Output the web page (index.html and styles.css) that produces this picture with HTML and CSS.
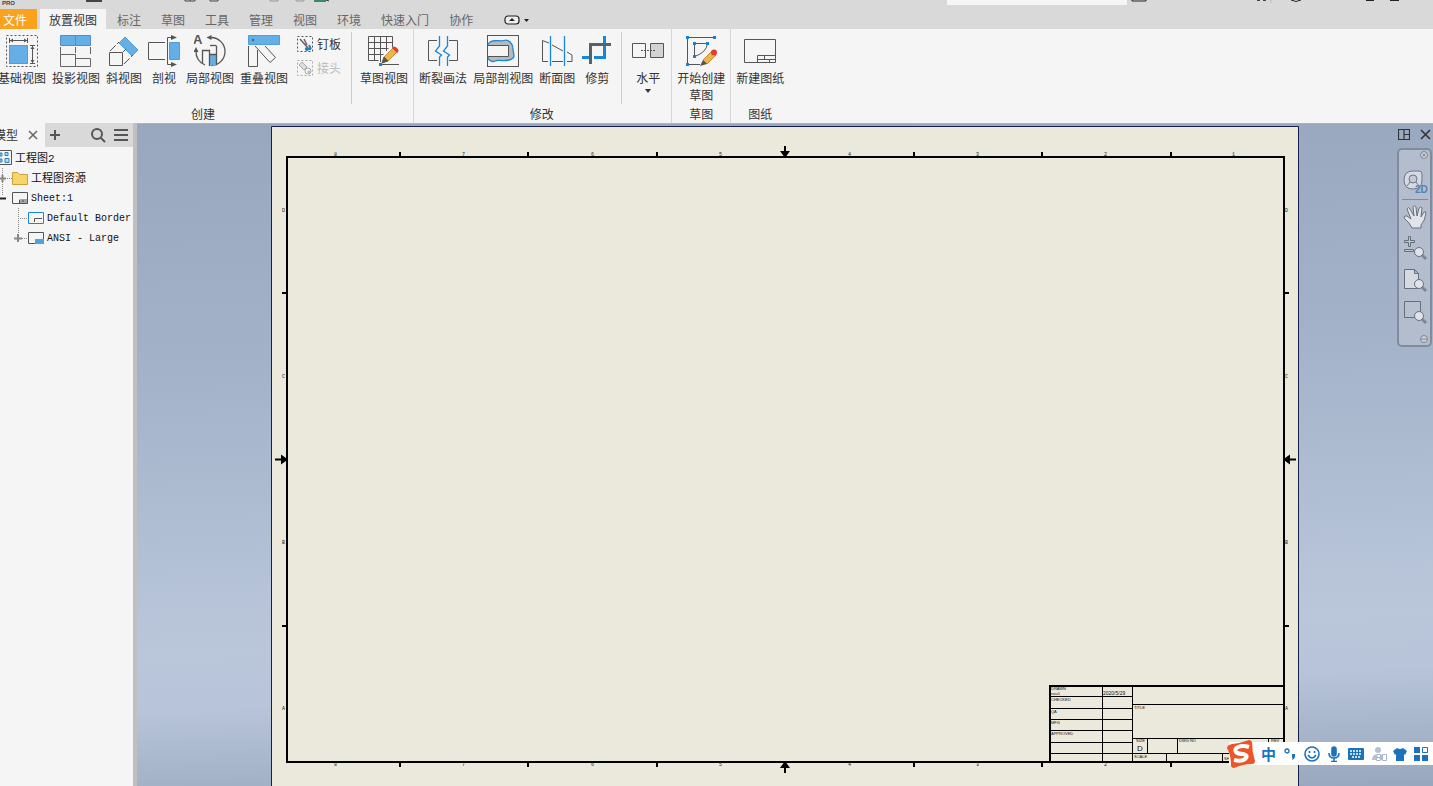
FILE: index.html
```html
<!DOCTYPE html>
<html lang="zh-CN">
<head>
<meta charset="utf-8">
<title>工程图2</title>
<link rel="stylesheet" href="styles.css">
</head>
<body>
<div class="app">
  <header class="titlebar">
    <svg class="quick" width="340" height="7" viewBox="0 0 340 7" fill="none" stroke="#444">
      <path d="M87 0v1h14V0" stroke-width="2"/><path d="M185 0v1h10V0M190 0v1M210 0v1h8V0"/>
      <path d="M270 0v1h8V0M296 0v1h8V0" stroke="#999"/><path d="M314 1h12" stroke="#3c8a64" stroke-width="2"/><path d="M326 0l3 1" stroke="#333"/>
      <text x="2" y="5" class="pro">PRO</text>
    </svg>
    <input class="search" type="text" aria-label="搜索">
    <svg class="window-controls" width="306" height="7" viewBox="0 0 306 7" fill="none" stroke="#222">
      <path d="M5 0v1h14V0" stroke-width="1"/><path d="M130 0h3M136 0h3" stroke-width="2" stroke="#444"/><path d="M144 0v3" stroke="#bbb"/><path d="M164 0q5 3 10 0"/><path d="M239 0h8M263 0h9" stroke-width="2"/>
    </svg>
  </header>

  <nav class="tabs">
    <button class="tab file">文件</button>
    <button class="tab active">放置视图</button>
    <button class="tab">标注</button>
    <button class="tab">草图</button>
    <button class="tab">工具</button>
    <button class="tab">管理</button>
    <button class="tab">视图</button>
    <button class="tab">环境</button>
    <button class="tab">快速入门</button>
    <button class="tab">协作</button>
    <button class="collapse" aria-label="折叠功能区">
      <svg width="26" height="10" viewBox="0 0 26 10"><rect x="1" y="1" width="14" height="8" rx="3" fill="#eee" stroke="#222" stroke-width="1.2"/><path d="M5 6l3-3 3 3zM20 4h5l-2.500 3z" fill="#222"/></svg>
    </button>
  </nav>

  <section class="ribbon">
    <div class="panel first">
      <div class="tools">
        <button class="tool"><svg width="32" height="32" viewBox="0 0 32 32" fill="none" stroke="#555"><rect x=".5" y=".5" width="31" height="31" stroke-dasharray="2 2"/><rect x="3.500" y="10.500" width="18" height="18" fill="#66afe6" stroke="#4f9fdb"/><path d="M3.500 3v5M21.500 3v5M4 5.500h17M24 10.500h5M24 28.500h5M26.500 11v17"/><path d="M4 5.500l3-2v4zM21 5.500l-3-2v4zM26.500 11l-2 3h4zM26.500 28l-2-3h4z" fill="#555" stroke="none"/></svg><span>基础视图</span></button>
        <button class="tool"><svg width="32" height="32" viewBox="0 0 32 32" fill="none" stroke="#666"><path d="M.5.500h30v10H.5z" fill="#66afe6" stroke="#4f8fc4"/><path d="M15.500 0v10" stroke="#4f8fc4"/><path d="M.5 12v7M30.500 12v7M15.500 12v6M.5 19.500h15v4h15v8H.5zM15.500 19.500h-15M15.500 31v-8"/></svg><span>投影视图</span></button>
        <button class="tool"><svg width="32" height="32" viewBox="0 0 32 32" fill="none" stroke="#555"><path d="M1.500 17.500h13v13h-13z"/><path d="M17 2l13 13-6 6L11 8z" fill="#66afe6" stroke="#4f9fdb"/><path d="M2 16L11 7M15 17l3-3M16 29L25 20" stroke-dasharray="8 2"/></svg><span>斜视图</span></button>
        <button class="tool"><svg width="32" height="32" viewBox="0 0 32 32" fill="none" stroke="#555"><path d="M17 7.500H.5v17H17M24 2.500h-4.500v27H24"/><path d="M23 0l6 2.500L23 5zM23 27l6 2.500-6 2.500z" fill="#555" stroke="none"/><path d="M21.500 7.500h10v17h-10z" fill="#66afe6" stroke="#4f9fdb"/></svg><span>剖视</span></button>
        <button class="tool"><svg width="32" height="32" viewBox="0 0 32 32" fill="none" stroke="#555" stroke-width="1.300"><path d="M17 2.500A14 14 0 0 1 17 30.500M2 16A14 14 0 0 0 11 30"/><path d="M2 12l-2.500 5h5zM12.500 2.500l5-2.500v5z" fill="#555" stroke="none"/><path d="M15 20h8v10.500h-8z" fill="#66afe6" stroke="none"/><path d="M8.500 28V15.500h7V31M15.500 19.500h7M22.500 30V10.500"/><path d="M16 10.500h6"/><text x="-1" y="9" class="mark">A</text></svg><span>局部视图</span></button>
        <button class="tool"><svg width="32" height="32" viewBox="0 0 32 32" fill="none" stroke="#555"><path d="M.5.500h31v9H.5z" fill="#66afe6" stroke="#4f9fdb"/><circle cx="5" cy="5" r="1.200" fill="#35638a" stroke="none"/><path d="M.5 11v20.500h9V15M7 11l15 16.500 5.500-5L17 11"/></svg><span>重叠视图</span></button>
        <div class="stack">
          <button class="mini"><svg width="16" height="16" viewBox="0 0 16 16" fill="none"><rect x=".5" y=".5" width="15" height="15" stroke="#555" stroke-dasharray="2 2"/><path d="M3 3l8 9M7 3l3 6" stroke="#735f68" stroke-width="1.500"/><path d="M8 13h6M12 9l2 4" stroke="#1c80cc" stroke-width="2"/><circle cx="10" cy="13" r="2" fill="#1c80cc"/></svg><span>钉板</span></button>
          <button class="mini" disabled><svg width="16" height="16" viewBox="0 0 16 16" fill="none" stroke="#aaa"><rect x=".5" y=".5" width="15" height="15" stroke-dasharray="2 2"/><path d="M2 5l3-3 5 5-3 3z" fill="#ddd"/><circle cx="11" cy="11" r="3"/><circle cx="12" cy="12" r="1"/></svg><span>接头</span></button>
        </div>
        <i class="sep"></i>
        <button class="tool"><svg width="32" height="32" viewBox="0 0 32 32" fill="none" stroke="#555"><path d="M.5 1.500h24v11M.5 1.500v24h10M.5 7.500h24M.5 13.500h20M.5 19.500h15M6.500 1v24M12.500 1v26M18.500 1v15M14 29.500h17"/><path d="M16 22L25 13l4 4-9 9z" fill="#edb44b" stroke="#c48f3c"/><path d="M16 22l4 4-6 2z" fill="#555"/><path d="M24 13q2-3 5 0t0 5z" fill="#e53c32" stroke="none"/><path d="M11 28h3v3h-3z" fill="#1c80cc" stroke="none"/></svg><span>草图视图</span></button>
      </div>
      <div class="panel-name">创建</div>
    </div>
    <div class="panel">
      <div class="tools">
        <button class="tool"><svg width="32" height="32" viewBox="0 0 32 32" fill="none" stroke="#555"><path d="M10 5.500H1.500v20H10M22 5.500h8.500v20H22"/><path d="M12.500 1v10l-4 5 6 4-2 2v9M20.500 1v10l-4 5 6 4-2 2v9" stroke="#1688dc" stroke-width="1.300"/></svg><span>断裂画法</span></button>
        <button class="tool"><svg width="32" height="32" viewBox="0 0 32 32" fill="none" stroke="#555"><path d="M1 9C5 3 12 7 17 5.500S26 9 26 14s4 9-4 11-10-1-14 1-6-2-7-2z" fill="#b7babd" stroke="#1688dc" stroke-width="1.300"/><path d="M0 10.500h21.500v11H0" fill="#f5f5f5"/><rect x=".5" y=".5" width="31" height="31"/></svg><span>局部剖视图</span></button>
        <button class="tool"><svg width="32" height="32" viewBox="0 0 32 32" fill="none" stroke="#555"><path d="M7 26.500H1.500v-21L8 8M11 10l11 6M11 26.500h11M26 17l5 3v6.500h-5"/><path d="M9.500 1v30M23.500 1v30" stroke="#1688dc" stroke-width="1.300"/></svg><span>断面图</span></button>
        <button class="tool"><svg width="32" height="32" viewBox="0 0 32 32" fill="none" stroke-width="3"><path d="M23.500 1v7M23.500 11v11.500H13M8 22.500H1" stroke="#1688dc"/><path d="M9.500 29V9.500H30" stroke="#596166"/></svg><span>修剪</span></button>
        <i class="sep wide"></i>
        <button class="tool drop"><svg width="32" height="32" viewBox="0 0 32 32" fill="none" stroke="#555"><path d="M.5 8.500h13v14H.5z"/><path d="M18.500 8.500h13v14h-13z" fill="#d3d3d3"/><path d="M9 15.500h14" stroke-dasharray="2 1"/></svg><span>水平</span><svg class="caret" width="6" height="4" viewBox="0 0 6 4"><path d="M0 0h6L3 4z" fill="#333"/></svg></button>
      </div>
      <div class="panel-name">修改</div>
    </div>
    <div class="panel">
      <div class="tools">
        <button class="tool"><svg width="32" height="32" viewBox="0 0 32 32" fill="none" stroke="#555"><path d="M2.500 29V2.500h27M2.500 29.500H15M9.500 21V8.500h13q-1 9-13 13"/><path d="M1 1h3v3H1zM28 1h3v3h-3zM1 28h3v3H1zM8 7h3v3H8zM21 7h3v3h-3zM8 20h3v3H8z" fill="#1c80cc" stroke="none"/><path d="M18 25l9-9 4 4-9 9z" fill="#edb44b" stroke="#c48f3c"/><path d="M18 25l4 4-7 2z" fill="#555" stroke="none"/><circle cx="29" cy="17.500" r="3" fill="#e53c32" stroke="none"/></svg><span>开始创建<br>草图</span></button>
      </div>
      <div class="panel-name">草图</div>
    </div>
    <div class="panel last">
      <div class="tools">
        <button class="tool"><svg width="32" height="32" viewBox="0 0 32 32" fill="none" stroke="#555"><path d="M.5 4.500h31v23H.5zM13.500 27V20.500H31M14 24.500h17M20.500 21v3M25.500 25v3"/></svg><span>新建图纸</span></button>
      </div>
      <div class="panel-name">图纸</div>
    </div>
  </section>

  <main class="workspace">
    <aside class="browser">
      <div class="browser-head">
        <div class="browser-tab"><span>模型</span><button aria-label="关闭"><svg width="10" height="10" viewBox="0 0 10 10"><path d="M1 1l8 8M9 1L1 9" stroke="#666" stroke-width="1.500"/></svg></button></div>
        <button aria-label="添加"><svg width="10" height="10" viewBox="0 0 10 10"><path d="M5 0v10M0 5h10" stroke="#555" stroke-width="2"/></svg></button>
        <button class="find" aria-label="查找"><svg width="15" height="15" viewBox="0 0 15 15" fill="none" stroke="#555" stroke-width="2"><circle cx="6" cy="6" r="5"/><path d="M10 10l4 4"/></svg></button>
        <button aria-label="菜单"><svg width="14" height="12" viewBox="0 0 14 12"><path d="M0 1h14M0 6h14M0 11h14" stroke="#555" stroke-width="2"/></svg></button>
      </div>
      <ul class="tree">
        <li><svg width="15" height="16" viewBox="0 0 15 16" fill="none" stroke="#555"><path d="M0 .5h11.500v14H0"/><path d="M0 3h2v3H0zM5 2.500h3v3H5zM5 8.500h4v4H5zM0 9h2v3H0z" stroke="#2f80b8" fill="#b4d9f3"/></svg><span>工程图2</span></li>
        <li><svg width="31" height="20" viewBox="0 0 31 20" fill="none"><path d="M2.500 0v20M7 10.500h5" stroke="#888" stroke-dasharray="1 1"/><path d="M0 10.500h6M2.500 7v7" stroke="#888" stroke-width="2"/><path d="M12.500 16.500V4.500h5l2 2h8v10z" fill="#f8d568" stroke="#caa13c"/></svg><span>工程图资源</span></li>
        <li class="latin"><svg width="31" height="20" viewBox="0 0 31 20" fill="none" stroke="#555"><path d="M2.500 0v8" stroke="#888" stroke-dasharray="1 1"/><path d="M0 10.500h6" stroke="#222" stroke-width="2"/><path d="M12.500 4.500h15v11h-15zM19.500 15v-3H27M19 14h8M23 12v2"/></svg><span>Sheet:1</span></li>
        <li class="latin"><svg width="47" height="20" viewBox="0 0 47 20" fill="none"><path d="M18.500 0v20M20 10.500h7" stroke="#888" stroke-dasharray="1 1"/><path d="M28.500 4.500h15v11h-15z" stroke="#1688dc"/><path d="M34.500 14v-3.500H42" stroke="#555"/></svg><span>Default Border</span></li>
        <li class="latin"><svg width="47" height="20" viewBox="0 0 47 20" fill="none"><path d="M18.500 0v6M22 10.500h5" stroke="#888" stroke-dasharray="1 1"/><path d="M14 10.500h8M18 6v8" stroke="#888" stroke-width="2"/><path d="M28.500 4.500h15v11h-15z" stroke="#555"/><path d="M35 11h9v5h-9z" fill="#4fa3de"/></svg><span>ANSI - Large</span></li>
      </ul>
    </aside>

    <div class="canvas">
      <svg class="sheet" width="1028" height="664" viewBox="0 0 1028 664" fill="none" stroke="#000">
        <path d="M.5 664V.5h1027V664" fill="#ebe9db" stroke="#16204a"/>
        <path d="M16 31h997v605H16z" stroke-width="2"/>
        <path d="M129 31v-5M257 31v-5M386 31v-5M643 31v-5M771 31v-5M900 31v-5M129 636v5M257 636v5M386 636v5M643 636v5M771 636v5M900 636v5M16 167h-5M16 500h-5M1013 167h5M1013 500h5M514 20v11M514 647v-11M4 333.500h12M1025 333.500h-12" stroke-width="2"/>
        <path d="M509 25h10l-5 7zM509 642h10l-5-7zM10 328.500v10l7-5zM1019 328.500v10l-7-5z" fill="#000" stroke="none"/>
        <g class="zone"><text x="63" y="30">8</text><text x="191" y="30">7</text><text x="320" y="30">6</text><text x="448" y="30">5</text><text x="577" y="30">4</text><text x="705" y="30">3</text><text x="833" y="30">2</text><text x="961" y="30">1</text>
        <text x="63" y="640">8</text><text x="191" y="640">7</text><text x="320" y="640">6</text><text x="448" y="640">5</text><text x="577" y="640">4</text><text x="705" y="640">3</text><text x="833" y="640">2</text><text x="961" y="640">1</text>
        <text x="11" y="86">D</text><text x="11" y="252">C</text><text x="11" y="418">B</text><text x="11" y="584">A</text><text x="1014" y="86">D</text><text x="1014" y="252">C</text><text x="1014" y="418">B</text><text x="1014" y="584">A</text></g>
        <path d="M779 636v-76h234" stroke-width="2"/>
        <path d="M779 570.500h82M779 582.500h82M779 593.500h82M779 604.500h82M779 616.500h82M779 627.500h234M831.500 560v76M861.500 560v76M861 578.500h152M861 612.500h152M876.500 612v15M906.500 612v15M997.500 612v15M895.500 627v9M951.500 627v9"/>
        <g class="field"><text x="780" y="564">DRAWN</text><text x="780" y="569">nou1</text><text x="780" y="575">CHECKED</text><text x="780" y="587">QA</text><text x="780" y="598">MFG</text><text x="780" y="609">APPROVED</text><text x="863" y="583">TITLE</text><text x="865" y="616">SIZE</text><text x="908" y="616">DWG NO</text><text x="1000" y="616">REV</text><text x="863" y="632">SCALE</text><text x="953" y="634">SHEET</text></g>
        <text class="date" x="832" y="569">2020/5/29</text><text class="size" x="866" y="625">D</text>
      </svg>
      <div class="view-controls">
        <button aria-label="平铺"><svg width="12" height="11" viewBox="0 0 12 11" fill="none" stroke="#333"><path d="M.5.500h11v10H.5zM6 1v9M6 5.500h5" stroke-width="1.200"/></svg></button>
        <button aria-label="关闭视图"><svg width="11" height="11" viewBox="0 0 11 11"><path d="M1 1l9 9M10 1L1 10" stroke="#333" stroke-width="1.600"/></svg></button>
      </div>
      <div class="navbar">
        <button class="knob" aria-label="关闭导航栏"><svg width="8" height="8" viewBox="0 0 8 8" fill="#c9d0dc" stroke="#7f8894"><circle cx="4" cy="4" r="3.500"/><path d="M2.500 2.500l3 3M5.500 2.500l-3 3"/></svg></button>
        <button aria-label="控制盘"><svg width="26" height="28" viewBox="0 0 26 28"><path d="M2 12q0-9 9-9h6q3 0 3 3v6q0 9-9 9t-9-9z" fill="#d5dae2" stroke="#6d7784"/><circle cx="11" cy="11" r="4" fill="#c3cad6" stroke="#6d7784"/><path d="M5 18l3-4M17 18l-3-4" fill="none" stroke="#6d7784"/><text x="13" y="25" class="two-d">2D</text></svg></button>
        <hr>
        <button aria-label="平移"><svg width="26" height="30" viewBox="0 0 26 30"><path d="M10 26q-2-5-8-10 0-3 3-2l4 3-4-10q1-3 3 0l4 7-1-9q1-3 3 0l1 9 2-8q2-2 3 0l-1 9 3-5q2-1 2 1-1 8-5 12v3z" fill="#e1e4e9" stroke="#68727d"/></svg></button>
        <button aria-label="缩放"><svg width="26" height="32" viewBox="0 0 26 32"><path d="M6.500 4.500h2v4h4v2h-4v4h-2v-4h-4v-2h4zM2.500 17.500h9v2h-9z" fill="#bdc4cf" stroke="#66707b"/><path d="M20 23l4 4" stroke="#7c8691" stroke-width="3"/><circle cx="17" cy="20" r="4.500" fill="#dfe3e9" stroke="#66707b"/></svg></button>
        <button aria-label="缩放全部"><svg width="26" height="32" viewBox="0 0 26 32"><path d="M2.500 5.500h10l4 4v15h-14zM12.500 5.500v4h4" fill="#d5dae2" stroke="#66707b"/><path d="M20 23l4 4" stroke="#7c8691" stroke-width="3"/><circle cx="17" cy="20" r="4.500" fill="#dfe3e9" stroke="#66707b"/></svg></button>
        <button aria-label="缩放窗口"><svg width="26" height="32" viewBox="0 0 26 32"><path d="M2.500 5.500h16v16h-16z" fill="#b7c1d1" stroke="#66707b"/><path d="M20 23l4 4" stroke="#7c8691" stroke-width="3"/><circle cx="17" cy="20" r="4.500" fill="#dfe3e9" stroke="#66707b"/></svg></button>
        <button class="knob bottom" aria-label="自定义"><svg width="8" height="8" viewBox="0 0 8 8" fill="#c9d0dc" stroke="#7f8894"><circle cx="4" cy="4" r="3.500"/><path d="M1 4h6"/></svg></button>
      </div>
    </div>
  </main>

  <div class="ime">
    <svg class="sogou" width="28" height="28" viewBox="0 0 28 28"><path d="M5 4q9-1 17-4 2 0 3 2 0 10 3 19 0 3-3 3-9 0-18 4-3 0-3-3Q4 15 0 8q0-3 5-4z" fill="#ec5627"/><path d="M22 7q-6-2-11 0-4 2-2 5 2 2 7 2 5 1 3 4-3 4-12 2" fill="none" stroke="#fff" stroke-width="4"/></svg>
    <button class="zh">中</button>
    <button aria-label="标点"><svg width="14" height="16" viewBox="0 0 14 16"><circle cx="4" cy="5" r="2" fill="none" stroke="#1b72be" stroke-width="1.300"/><path d="M9 8h3v3q-1 3-3 3 1-2 0-3z" fill="#1b72be"/></svg></button>
    <button aria-label="表情"><svg width="16" height="16" viewBox="0 0 16 16" fill="none" stroke="#1b72be" stroke-width="1.600"><circle cx="8" cy="8" r="7"/><path d="M4 9q4 6 8 0M5.500 5v2M10.500 5v2"/></svg></button>
    <button aria-label="语音"><svg width="14" height="16" viewBox="0 0 14 16" fill="none" stroke="#1b72be" stroke-width="1.600"><rect x="5" y="1" width="4" height="9" rx="2" fill="#1b72be"/><path d="M2 7q0 5 5 5t5-5M7 12v4M4 15.500h6"/></svg></button>
    <button aria-label="键盘"><svg width="16" height="12" viewBox="0 0 16 12"><rect width="16" height="12" rx="1" fill="#1b72be"/><path d="M2 3h12M2 6h12M4 9h8" stroke="#fff" stroke-width="1.500" stroke-dasharray="2 1"/></svg></button>
    <button class="account" aria-label="账户"><svg width="17" height="16" viewBox="0 0 17 16"><circle cx="7" cy="4" r="3" fill="#b7c0d3"/><path d="M1 14q0-6 6-6 4 0 5 2v4z" fill="#b7c0d3"/><path d="M5.500 8.500h4v3h-4v3h4M11.500 8.500h4v6h-4z" fill="#fff" stroke="#a8b4cb"/></svg></button>
    <button aria-label="皮肤"><svg width="14" height="14" viewBox="0 0 14 14"><path d="M4 1q3 2 6 0l4 3-2 4-1-1v7H3V7L2 8 0 4z" fill="#1b72be"/></svg></button>
    <button aria-label="工具箱"><svg width="14" height="14" viewBox="0 0 14 14"><path d="M0 0h6v6H0zM0 8h6v6H0zM8 8h6v6H8z" fill="#1b72be"/><path d="M8.500.500h5v5h-5z" fill="none" stroke="#1b72be"/></svg></button>
  </div>
</div>
</body>
</html>
```
FILE: styles.css
```css
* { box-sizing: border-box; }
body { margin: 0; font: 12px/16px "Noto Sans CJK SC", sans-serif; color: #333; background: #f5f5f5; }
button { font: inherit; color: inherit; background: none; border: 0; padding: 0; margin: 0; white-space: nowrap; }
svg { display: block; flex: none; }
.app { position: relative; display: flex; flex-direction: column; height: 100vh; overflow: hidden; }

.titlebar { display: flex; height: 9px; background: #d9d9d9; flex: none; }
.pro { font: bold 6px "Liberation Sans", sans-serif; fill: #444; stroke: none; }
.search { width: 180px; height: 5px; margin: 0 0 0 auto; padding: 0; border: 0; background: #f5f5f5; }

.tabs { display: flex; height: 20px; background: #d9d9d9; flex: none; }
.tab { padding: 1px 10px 0; color: #666; }
.tab.file { background: #faa21b; color: #fff; width: 37px; padding: 1px 10px 0 3px; margin-right: 3px; }
.tab.active { background: #f5f5f5; color: #333; padding: 1px 9px 0; margin-right: 1px; }
.collapse { margin-left: 21px; padding-top: 1px; }

.ribbon { display: flex; height: 94px; margin-left: -7px; flex: none; background: #f5f5f5; }
.panel { display: flex; flex-direction: column; padding: 0 5px; border-right: 1px solid #d6d6d6; }
.panel.last { border-right: 0; }
.tools { display: flex; align-items: flex-start; gap: 6px; flex: 1; }
.tool { display: flex; flex-direction: column; align-items: center; min-width: 32px; padding-top: 6px; gap: 2px; line-height: 17px; }
.tool .caret { margin-top: 1px; }
.mark { font: bold 13px "Liberation Sans", sans-serif; fill: #555; stroke: none; }
.drop { margin-left: 4px; }
.stack { display: flex; flex-direction: column; gap: 8px; padding: 7px 4px 0 3px; }
.mini { display: flex; align-items: center; gap: 4px; }
.mini:disabled { color: #bbb; }
.sep { width: 1px; height: 72px; margin: 3px 2px 0 0; background: #ccc; }
.sep.wide { margin: 3px 0 0 2px; }
.panel:nth-child(2) { padding-right: 7px; }
.panel-name { text-align: center; height: 17px; }

.workspace { display: flex; flex: 1; min-height: 0; }
.browser { width: 137px; flex: none; border-right: 4px solid #bfc0bf; background: #f5f5f5; }
.browser-head { display: flex; align-items: center; gap: 8px; height: 24px; padding-right: 5px; background: #d9d9d9; }
.browser-tab { display: flex; align-items: center; gap: 10px; height: 24px; width: 45px; background: #f5f5f5; }
.browser-tab span { margin-left: -6px; }
.browser-head > button:nth-child(2) { margin-left: -3px; }
.find { margin-left: auto; }
.tree { list-style: none; margin: 0; padding: 1px 0; font: 11px/20px "Liberation Mono", "Noto Sans CJK SC", monospace; color: #111; }
.tree li { display: flex; align-items: center; height: 20px; white-space: nowrap; }
.tree span { padding-top: 2px; }
.tree .latin { font-size: 10px; }

.canvas { position: relative; flex: 1; display: flex; justify-content: center; padding-top: 2px; overflow: hidden; border-top: 1px solid #a9b2c0; background: linear-gradient(178deg, #98a6be 0%, #a3b2c9 35%, #bac7db 75%, #b7c4d9 83%, #98a7bd 100%); }
.zone { font: 5px "Liberation Mono", monospace; fill: #222; stroke: none; }
.field { font: 4px "Liberation Sans", sans-serif; fill: #111; stroke: none; }
.date { font: 5px "Liberation Sans", sans-serif; fill: #111; stroke: none; }
.size { font: 8px "Liberation Sans", sans-serif; fill: #111; stroke: none; }
.view-controls { position: absolute; top: 5px; right: 2px; display: flex; gap: 10px; }
.navbar { position: absolute; top: 24px; right: 1px; width: 35px; display: flex; flex-direction: column; align-items: center; border: 2px solid #808b9c; border-radius: 5px; background: #b3bdcd; }
.navbar hr { width: 26px; margin: 3px 0 2px; border: 0; border-top: 1px solid #808b9c; }
.knob { align-self: flex-end; padding: 1px 2px 9px 0; }
.knob.bottom { padding: 7px 2px 2px 0; }
.two-d { font: bold 10px "Liberation Sans", sans-serif; fill: #4e83b4; }

.ime { position: absolute; right: 0; bottom: 21px; display: flex; align-items: center; gap: 7px; height: 23px; padding-right: 5px; background: #fff; }
.sogou { margin: 0 -1px 0 -2px; }
.account { margin-right: -2px; }
.zh { font: bold 15px/20px "Noto Sans CJK SC", sans-serif; color: #1b72be; }
```
